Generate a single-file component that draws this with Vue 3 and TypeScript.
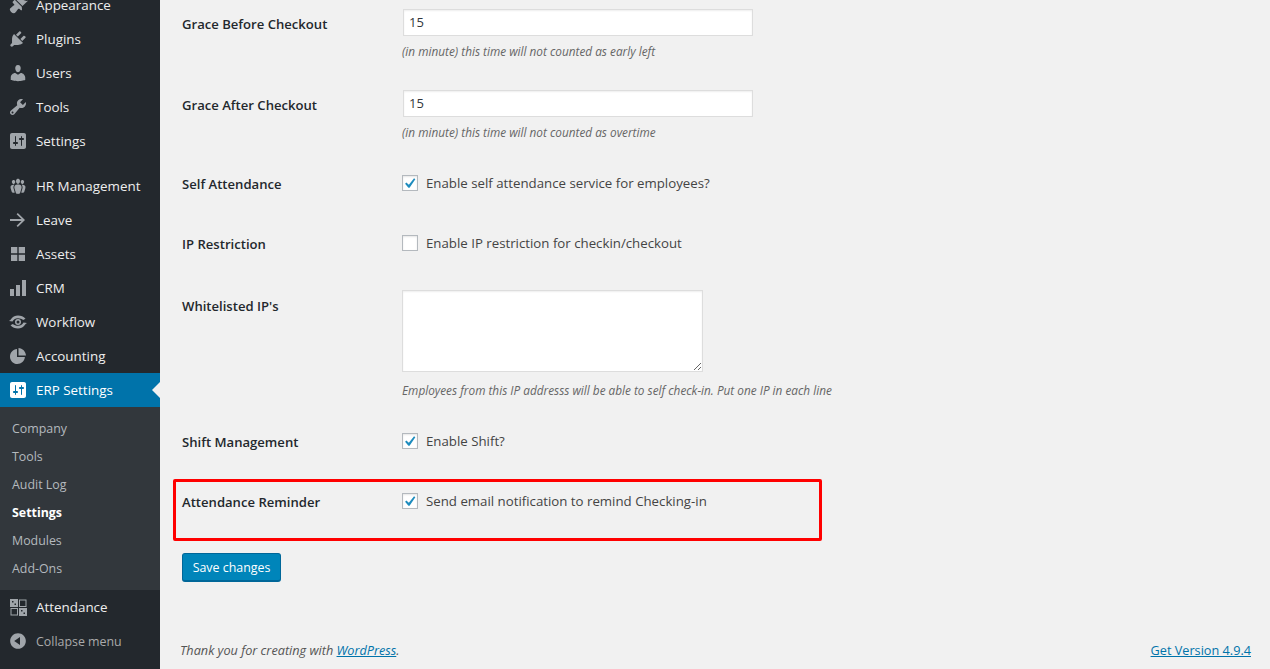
<script setup lang="ts">
interface MenuItem {
  label: string;
  icon: string;
  active?: boolean;
  gapBefore?: boolean;
}

// Dashicons-style glyphs on a 20x20 box
const icons: Record<string, string> = {
  appearance:
    "M14.48 11.06L7.41 3.99l1.5-1.5c.5-.56 2.3-.47 3.51.32 1.21.8 1.43 1.28 2.91 2.1 1.18.64 2.45 1.26 4.67.85zM13.77 11.77L6.7 4.7 4.93 6.47c-.39.39-.39 1.02 0 1.41l1.06 1.06c.39.39.39 1.03 0 1.42-.6.6-1.43 1.11-2.21 1.69-.35.26-.7.53-1.01.84C1.43 13.23 1.4 15.2 3.1 16.9c1.7 1.7 3.67 1.67 4.5.33.31-.31.58-.66.84-1.01.58-.78 1.09-1.61 1.69-2.21.39-.39 1.03-.39 1.42 0l1.06 1.06c.39.39 1.02.39 1.41 0z",
  plugins:
    "M13.11 4.36L9.87 7.6 8 5.73l3.24-3.24c.35-.34 1.05-.2 1.56.32.52.51.66 1.21.31 1.55zm-8 1.77l.91-1.12 9.01 9.01-1.19.84c-.71.71-2.63 1.16-3.82 1.16H6.14L4.9 17.26c-.59.59-1.54.59-2.12 0-.59-.58-.59-1.53 0-2.12l1.24-1.24v-3.88c0-1.13.4-3.19 1.09-3.89zm7.26 3.97l3.24-3.24c.34-.35 1.04-.21 1.55.31.52.51.66 1.21.31 1.55l-3.24 3.25z",
  users:
    "M10 9.25c-2.27 0-2.73-3.44-2.73-3.44C7 4.02 7.82 2 9.97 2c2.16 0 2.98 2.02 2.71 3.81 0 0-.41 3.44-2.68 3.44zm0 2.57L12.72 10c2.39 0 4.52 2.33 4.52 4.53v2.49s-3.65 1.13-7.24 1.13c-3.65 0-7.24-1.13-7.24-1.13v-2.49c0-2.25 1.94-4.48 4.47-4.48z",
  tools:
    "M16.68 9.77c-1.34 1.34-3.3 1.67-4.95.99l-5.41 6.52c-.99.99-2.59.99-3.58 0s-.99-2.59 0-3.57l6.52-5.42c-.68-1.65-.35-3.61.99-4.95 1.28-1.28 3.12-1.62 4.72-1.06l-2.89 2.89 2.82 2.82 2.86-2.87c.53 1.58.18 3.39-1.08 4.65zM3.81 16.21c.4.39 1.04.39 1.43 0 .4-.4.4-1.04 0-1.43-.39-.4-1.03-.4-1.43 0-.39.39-.39 1.03 0 1.43z",
  settings:
    "M18 16V4c0-1.1-.9-2-2-2H4c-1.1 0-2 .9-2 2v12c0 1.1.9 2 2 2h12c1.1 0 2-.9 2-2zM8 11h1c.55 0 1 .45 1 1s-.45 1-1 1H8v1.5c0 .28-.22.5-.5.5s-.5-.22-.5-.5V13H6c-.55 0-1-.45-1-1s.45-1 1-1h1V5.5c0-.28.22-.5.5-.5s.5.22.5.5V11zm5-2h-1c-.55 0-1-.45-1-1s.45-1 1-1h1V5.5c0-.28.22-.5.5-.5s.5.22.5.5V7h1c.55 0 1 .45 1 1s-.45 1-1 1h-1v5.5c0 .28-.22.5-.5.5s-.5-.22-.5-.5V9z",
  groups:
    "M8.03 4.46c-.29 1.28.55 3.46 1.97 3.46 1.41 0 2.25-2.18 1.96-3.46-.22-.98-1.08-1.63-1.96-1.63-.89 0-1.74.65-1.97 1.63zm-4.13.9c-.25 1.08.47 2.93 1.67 2.93s1.92-1.85 1.67-2.93c-.19-.83-.92-1.39-1.67-1.39s-1.48.56-1.67 1.39zm8.86 0c-.25 1.08.47 2.93 1.66 2.93 1.2 0 1.92-1.85 1.67-2.93-.19-.83-.92-1.39-1.67-1.39-.74 0-1.47.56-1.66 1.39zm-.59 11.43l1.25-4.3C14.2 10 12.71 8.47 10 8.47c-2.72 0-4.21 1.53-3.44 4.02l1.26 4.3C8.05 17.51 9 18 10 18c.98 0 1.94-.49 2.17-1.21zm-6.1-7.63c-.49.67-.96 1.83-.42 3.59l1.12 3.79c-.34.2-.77.31-1.2.31-.85 0-1.65-.41-1.85-1.03l-1.07-3.65c-.65-2.11.61-3.4 2.92-3.4.27 0 .54.02.79.06-.1.1-.2.22-.29.33zm8.35-.39c2.31 0 3.58 1.29 2.92 3.4l-1.07 3.65c-.2.62-1 1.03-1.85 1.03-.43 0-.86-.11-1.2-.31l1.11-3.77c.55-1.78.08-2.94-.42-3.61-.08-.11-.18-.23-.28-.33.25-.04.51-.06.79-.06z",
  leave: "M9.8 3L8.6 4.2 13.5 9.1H2v1.8h11.5l-4.9 4.9L9.8 17 17 10z",
  assets: "M3 3h6.3v6.3H3zM10.7 3H17v6.3h-6.3zM3 10.7h6.3V17H3zM10.7 10.7H17V17h-6.3z",
  crm: "M2 11h4v7H2zM8 7h4v11H8zM14 2h4v16h-4z",
  workflow:
    "M1 9C3 8.500 4 3.500 10 3.500c3 0 5.500 1 7.500 3.200l-2.400 1.300C14 6.900 12 6.200 10 6.200 7 6.200 5.500 7.700 4.500 9.500zM19 11c-2 .5-3 5.500-9 5.500-3 0-5.500-1-7.500-3.200l2.400-1.300c1.100 1.100 3.100 1.800 5.100 1.800 3 0 4.500-1.500 5.500-3.300zM10 7a3 3 0 1 1 0 6 3 3 0 0 1 0-6zM10 8.500a1.500 1.500 0 1 0 0 3 1.500 1.500 0 0 0 0-3z",
  accounting:
    "M9 3.1C5 3.4 2 6.7 2 10.7 2 14.8 5.3 18 9.3 18c4 0 7.3-3 7.6-7H9zM10.500 2v7.500H18C17.700 5.400 14.600 2.300 10.500 2z",
  attendance:
    "M2 2h8v8H2zM4 4v1.500h1.500V4zM6.500 6.500V8H8V6.500zM11 2.500h7.500V10H11zM12 3.500V9h5.500V3.500zM2.500 11H10v7.500H2.500zM3.500 12v5.500H9V12zM11 11h8v8h-8zM13 13v1.500h1.500V13zM15.500 15.500V17H17v-1.500z",
  collapse:
    "M10 2.16c4.33 0 7.84 3.51 7.84 7.84s-3.51 7.84-7.84 7.84S2.16 14.33 2.16 10 5.71 2.16 10 2.16zm2 11.72V6.12L6.18 9.97z",
};

const topItems: MenuItem[] = [
  { label: "Appearance", icon: "appearance" },
  { label: "Plugins", icon: "plugins" },
  { label: "Users", icon: "users" },
  { label: "Tools", icon: "tools" },
  { label: "Settings", icon: "settings" },
  { label: "HR Management", icon: "groups", gapBefore: true },
  { label: "Leave", icon: "leave" },
  { label: "Assets", icon: "assets" },
  { label: "CRM", icon: "crm" },
  { label: "Workflow", icon: "workflow" },
  { label: "Accounting", icon: "accounting" },
  { label: "ERP Settings", icon: "settings", active: true },
];

const subItems = ["Company", "Tools", "Audit Log", "Settings", "Modules", "Add-Ons"];
</script>

<template>
  <div class="page">
    <aside class="sidebar">
      <a
        v-for="item in topItems"
        :key="item.label"
        class="menu-item"
        :class="{ active: item.active, gap: item.gapBefore }"
      >
        <svg class="menu-icon" viewBox="0 0 20 20"><path :d="icons[item.icon]" fill-rule="evenodd" /></svg>
        <span>{{ item.label }}</span>
      </a>
      <div class="submenu">
        <a v-for="sub in subItems" :key="sub" class="sub-item" :class="{ current: sub === 'Settings' }">{{ sub }}</a>
      </div>
      <a class="menu-item">
        <svg class="menu-icon" viewBox="0 0 20 20"><path :d="icons.attendance" fill-rule="evenodd" /></svg>
        <span>Attendance</span>
      </a>
      <a class="menu-item collapse">
        <svg class="menu-icon" viewBox="0 0 20 20"><path :d="icons.collapse" /></svg>
        <span>Collapse menu</span>
      </a>
    </aside>

    <main class="main">
      <form class="form" @submit.prevent>
        <div class="row row-grace-1">
          <label class="row-label">Grace Before Checkout</label>
          <div>
            <input class="text-input" type="text" value="15" />
            <p class="hint hint-input">(in minute) this time will not counted as early left</p>
          </div>
        </div>
        <div class="row row-grace-2">
          <label class="row-label">Grace After Checkout</label>
          <div>
            <input class="text-input" type="text" value="15" />
            <p class="hint hint-input">(in minute) this time will not counted as overtime</p>
          </div>
        </div>
        <div class="row row-self">
          <label class="row-label">Self Attendance</label>
          <label class="check">
            <span class="box"><svg viewBox="0 0 16 16"><path d="M12.6 2.6l1.5 1.1-6.6 9.8H6.2L2.4 8.9l1.4-1.4 2.9 2.5z" /></svg></span>
            Enable self attendance service for employees?
          </label>
        </div>
        <div class="row row-ip">
          <label class="row-label">IP Restriction</label>
          <label class="check"><span class="box"></span> Enable IP restriction for checkin/checkout</label>
        </div>
        <div class="row row-white">
          <label class="row-label white-label">Whitelisted IP's</label>
          <div>
            <textarea class="area"></textarea>
            <p class="hint hint-area">Employees from this IP addresss will be able to self check-in. Put one IP in each line</p>
          </div>
        </div>
        <div class="row row-shift">
          <label class="row-label">Shift Management</label>
          <label class="check">
            <span class="box"><svg viewBox="0 0 16 16"><path d="M12.6 2.6l1.5 1.1-6.6 9.8H6.2L2.4 8.9l1.4-1.4 2.9 2.5z" /></svg></span>
            Enable Shift?
          </label>
        </div>
        <div class="row row-remind">
          <label class="row-label">Attendance Reminder</label>
          <label class="check">
            <span class="box"><svg viewBox="0 0 16 16"><path d="M12.6 2.6l1.5 1.1-6.6 9.8H6.2L2.4 8.9l1.4-1.4 2.9 2.5z" /></svg></span>
            Send email notification to remind Checking-in
          </label>
          <span class="highlight"></span>
        </div>
        <button class="save" type="submit">Save changes</button>
      </form>

      <footer class="footer">
        <span class="thanks">Thank you for creating with <a class="link">WordPress</a>.</span>
        <a class="link">Get Version 4.9.4</a>
      </footer>
    </main>
  </div>
</template>

<style>
html,
body {
  margin: 0;
  height: 100%;
  overflow: hidden;
  background: #f1f1f1;
}
</style>

<style scoped>
.page {
  display: flex;
  height: 669px;
  overflow: hidden;
  font-family: "Open Sans", "Noto Sans", sans-serif;
  color: #444;
}
.sidebar {
  width: 160px;
  flex: none;
  margin-top: -12px;
  padding-bottom: 23px;
  background: #23282d;
}
.menu-item {
  position: relative;
  display: flex;
  align-items: center;
  height: 34px;
  padding-left: 8px;
  gap: 8px;
  font-size: 13.4px;
  color: #eee;
}
.menu-item.gap {
  margin-top: 11px;
}
.menu-item.active {
  background: #0073aa;
  color: #fff;
}
.menu-item.active::after {
  content: "";
  position: absolute;
  right: 0;
  top: 9px;
  border: 8px solid transparent;
  border-right-color: #f1f1f1;
  border-left-width: 0;
}
.menu-item.collapse {
  color: #aaa;
  font-size: 12.4px;
}
.menu-icon {
  width: 20px;
  height: 20px;
  flex: none;
  fill: #a0a5aa;
}
.menu-item.active .menu-icon {
  fill: #fff;
}
.submenu {
  display: flex;
  flex-direction: column;
  padding: 8px 0 7px;
  background: #32373c;
}
.sub-item {
  height: 28px;
  line-height: 28px;
  padding-left: 12px;
  font-size: 12.4px;
  color: #b4b9be;
}
.sub-item.current {
  color: #fff;
  font-weight: 700;
}
.main {
  flex: 1;
  display: flex;
  flex-direction: column;
  padding: 9px 19px 0 20px;
  min-width: 0;
}
.form {
  display: flex;
  flex-direction: column;
  padding-left: 2px;
}
.row {
  position: relative;
  display: grid;
  grid-template-columns: 220px 1fr;
  font-size: 13px;
}
.row-grace-2 {
  margin-top: 30px;
}
.row-self {
  margin-top: 32px;
}
.row-ip {
  margin-top: 40px;
}
.row-white {
  margin-top: 37px;
}
.row-shift {
  margin-top: 32px;
}
.row-remind {
  margin-top: 40px;
}
.row-label {
  font-weight: 600;
  font-size: 13.1px;
  color: #23282d;
  line-height: 22px;
  margin-bottom: -2px;
}
.row-grace-1 .row-label,
.row-grace-2 .row-label {
  padding-top: 4px;
}
.white-label {
  padding-top: 5px;
}
.text-input {
  display: block;
  box-sizing: border-box;
  width: 350px;
  height: 27px;
  margin-left: 1px;
  padding: 0 5px 2px;
  border: 1px solid #ddd;
  background: #fff;
  color: #32373c;
  font: 13px "Open Sans", sans-serif;
  outline: none;
  box-shadow: inset 0 1px 2px rgba(0, 0, 0, 0.07);
}
.hint {
  margin: 0;
  font-size: 11.8px;
  font-style: italic;
  line-height: 18px;
  color: #666;
}
.hint-input {
  margin-top: 6px;
}
.hint-area {
  margin-top: 9px;
  white-space: nowrap;
}
.area {
  display: block;
  box-sizing: border-box;
  width: 301px;
  height: 82px;
  margin: 0;
  border: 1px solid #ddd;
  background: #fff;
  outline: none;
  box-shadow: inset 0 1px 2px rgba(0, 0, 0, 0.07);
}
.check {
  display: flex;
  align-items: center;
  gap: 8px;
  height: 20px;
  font-size: 13.25px;
  color: #444;
}
.box {
  box-sizing: border-box;
  display: block;
  width: 16px;
  height: 16px;
  flex: none;
  border: 1px solid #b4b9be;
  background: #fff;
  box-shadow: inset 0 1px 2px rgba(0, 0, 0, 0.1);
}
.box svg {
  display: block;
  width: 14px;
  height: 14px;
  fill: #1e8cbe;
}
.highlight {
  position: absolute;
  left: -9px;
  top: -12px;
  width: 643px;
  height: 56px;
  border: 3px solid #f00;
  border-radius: 2px;
}
.save {
  align-self: flex-start;
  box-sizing: border-box;
  width: 99px;
  height: 29px;
  margin-top: 42px;
  padding: 0;
  border: 1px solid #006799;
  border-bottom-width: 2px;
  border-radius: 3px;
  background: #0085ba;
  color: #fff;
  font: 12.4px "Open Sans", sans-serif;
}
.footer {
  display: flex;
  justify-content: space-between;
  align-items: center;
  margin-top: 58px;
  height: 20px;
  font-size: 12.7px;
}
.thanks {
  font-style: italic;
  color: #555;
}
.link {
  color: #0073aa;
  text-decoration: underline;
}
</style>
